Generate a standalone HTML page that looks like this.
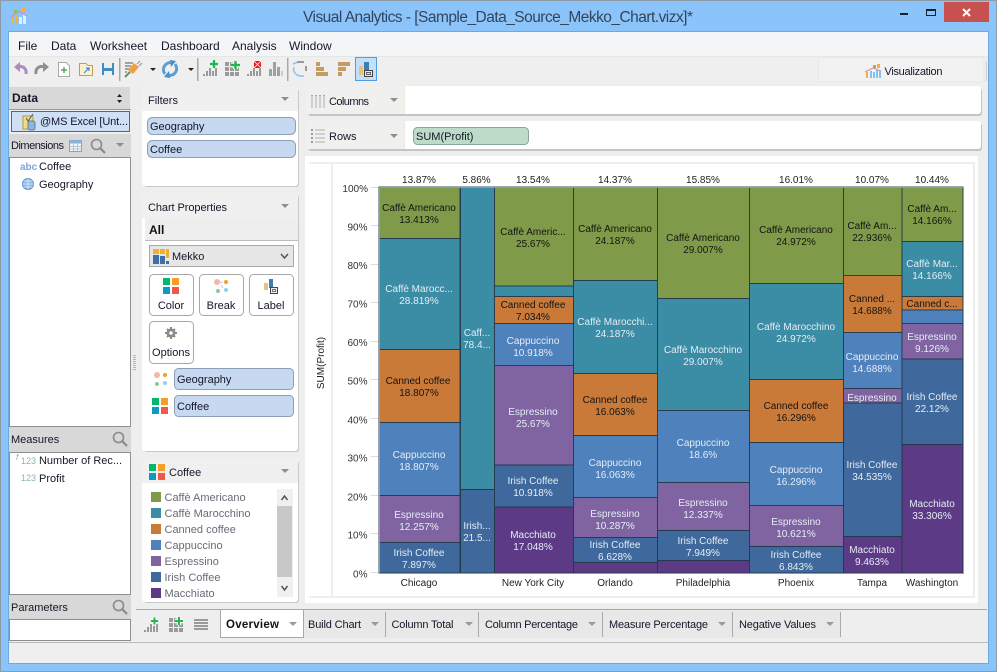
<!DOCTYPE html>
<html><head><meta charset="utf-8"><title>Visual Analytics</title>
<style>
html,body{margin:0;padding:0;background:#8bc4fb;}
svg{display:block;font-family:"Liberation Sans",sans-serif;}
.u{font-size:11px;fill:#16162a;}
.c text{font-size:10px;text-anchor:middle;}
.d text{fill:#141414;}
.l text{fill:#e4edf4;}
.a text{font-size:10px;fill:#333;}
.x text{font-size:10px;fill:#222;text-anchor:middle;}
.s rect{stroke:#24384a;stroke-width:1;stroke-opacity:.9;shape-rendering:crispEdges;}
.lg{font-size:11px;fill:#6a6a78;}
</style></head><body>
<svg width="997" height="672" viewBox="0 0 997 672" xmlns="http://www.w3.org/2000/svg">
<!-- window frame -->
<rect x="0" y="0" width="997" height="672" fill="#8bc4fb"/>
<rect x="0.5" y="0.5" width="996" height="671" fill="none" stroke="#8e9aa6"/>
<rect x="8.5" y="31.5" width="980" height="632" fill="#eeeeee" stroke="#6fa8dc"/>
<text x="498" y="22" font-size="15.5" fill="#34445a" text-anchor="middle" textLength="390" lengthAdjust="spacing">Visual Analytics - [Sample_Data_Source_Mekko_Chart.vizx]*</text>
<!-- app icon -->
<g>
<rect x="11" y="18" width="3" height="6" fill="#f5b335"/><rect x="15" y="15" width="3" height="9" fill="#f5b335"/><rect x="19" y="17" width="3" height="7" fill="#d8f0ff"/><rect x="23" y="14" width="3" height="10" fill="#d8f0ff"/>
<path d="M11 17 L19 11 L27 16" stroke="#d88bb8" stroke-width="1.4" fill="none"/>
<rect x="14" y="10" width="3" height="3" fill="#8cc152"/><rect x="22" y="8" width="4" height="4" fill="#f5b335"/>
</g>
<!-- window controls -->
<rect x="900" y="13" width="8" height="2" fill="#16222e"/>
<rect x="926.5" y="9.5" width="9" height="6" fill="none" stroke="#16222e"/><rect x="926" y="9" width="10" height="2" fill="#16222e"/>
<rect x="944" y="2" width="45" height="20" fill="#c75050"/>
<path d="M963 9 L970 16 M970 9 L963 16" stroke="#fff" stroke-width="2"/>
<!-- menu bar -->
<rect x="9" y="32" width="979" height="24" fill="#f4f5f7"/>
<g font-size="12" fill="#16162a">
<text x="18" y="50">File</text><text x="51" y="50">Data</text><text x="90" y="50">Worksheet</text><text x="161" y="50">Dashboard</text><text x="232" y="50">Analysis</text><text x="289" y="50">Window</text>
</g>
<rect x="9" y="56" width="979" height="1" fill="#e6e6e6"/>
<rect x="9" y="57" width="979" height="28" fill="#efefef"/>
<!-- toolbar icons -->
<path d="M26 74 C27 68 22 65 17 67" fill="none" stroke="#a98cc0" stroke-width="3"/><path d="M14 67 L20 62 L20 72 Z" fill="#a98cc0"/>
<path d="M36 74 C35 68 40 65 45 67" fill="none" stroke="#8f8f8f" stroke-width="3"/><path d="M49 67 L43 62 L43 72 Z" fill="#8f8f8f"/>
<path d="M58.5 62.5 H66 L69.5 66 V76.5 H58.5 Z" fill="#fff" stroke="#aaa"/><path d="M61 70 H67 M64 67 V73" stroke="#2e9d46" stroke-width="1.2"/>
<path d="M79.5 63.5 H86 L88 65.5 H92.5 V75.5 H79.5 Z" fill="#fdf0cf" stroke="#c49a5c"/><path d="M84 73 L89 68 M86 68 H89 V71" stroke="#3d8ed0" stroke-width="1.2" fill="none"/>
<rect x="102" y="63" width="12" height="12" fill="#3f8bc6"/><rect x="104" y="63" width="8" height="5" fill="#efefef"/><rect x="104" y="71" width="8" height="4" fill="#efefef"/>
<rect x="119" y="58" width="1.5" height="23" fill="#a8a8a8"/>
<path d="M125 63 H133 M125 66 H131 M125 69 H129 M125 72 H127" stroke="#8a8a8a" stroke-width="1.500"/>
<path d="M128 70 L134 63 L139 67 L133 74 Z" fill="#f0a040"/>
<path d="M137 64 L140 61 M139 66 L142 63" stroke="#999" stroke-width="1.200"/>
<path d="M130 72 L125 77" stroke="#6a8a60" stroke-width="2"/>
<path d="M150 68 H156 L153 71 Z" fill="#222"/>
<path d="M165 74 C161 69 165 62 172 62.500" fill="none" stroke="#5a9fd4" stroke-width="3"/><path d="M175 64 C179 70 175 76 168 75.500" fill="none" stroke="#5a9fd4" stroke-width="3"/><path d="M170 60 L176 61 L171 67 Z M170 78 L164 77 L169 71 Z" fill="#4a8ec4"/>
<path d="M188 68 H194 L191 71 Z" fill="#222"/>
<rect x="197" y="58" width="1.5" height="23" fill="#a8a8a8"/>
<g fill="#9a9a9a"><rect x="203" y="74" width="2" height="2"/><rect x="206" y="71" width="2" height="5"/><rect x="209" y="68" width="2" height="8"/><rect x="212" y="71" width="2" height="5"/><rect x="215" y="68" width="2" height="8"/></g>
<path d="M210 64 H218 M214 60 V68" stroke="#fff" stroke-width="5"/><path d="M210 64 H218 M214 60 V68" stroke="#1fb84f" stroke-width="2.4"/>
<g fill="#9a9a9a"><rect x="225" y="62" width="4" height="4"/><rect x="230" y="62" width="4" height="4"/><rect x="225" y="67" width="4" height="4"/><rect x="230" y="67" width="4" height="4"/><rect x="235" y="67" width="4" height="4"/><rect x="225" y="72" width="4" height="4"/><rect x="230" y="72" width="4" height="4"/><rect x="235" y="72" width="4" height="4"/></g>
<path d="M231 65 H240 M235.500 61 V69" stroke="#fff" stroke-width="5"/><path d="M231 65 H240 M235.500 61 V69" stroke="#1fb84f" stroke-width="2.4"/>
<g fill="#9a9a9a"><rect x="247" y="74" width="2" height="2"/><rect x="250" y="71" width="2" height="5"/><rect x="253" y="68" width="2" height="8"/><rect x="256" y="71" width="2" height="5"/><rect x="259" y="68" width="2" height="8"/></g>
<rect x="254" y="61" width="7" height="7" fill="#e81b1b"/><path d="M254 61 L261 68 M261 61 L254 68" stroke="#fff" stroke-width=".8"/>
<g fill="#a0a0a0"><rect x="269" y="69" width="3" height="7"/><rect x="273" y="62" width="3" height="14"/><rect x="277" y="67" width="3" height="9"/></g><g fill="#cacaca"><rect x="281" y="71" width="2" height="5"/></g>
<rect x="287" y="58" width="1.5" height="23" fill="#a8a8a8"/>
<path d="M294 67 C292 73 298 77 304 76" stroke="#8fc4ea" stroke-width="1.5" fill="none"/><path d="M293 64 L298 62" stroke="#8fc4ea" stroke-width="1.5"/><rect x="297" y="61" width="7" height="2" fill="#9a9a9a"/><rect x="305" y="66" width="2" height="5" fill="#9a9a9a"/>
<g fill="#c59b63"><rect x="316" y="62" width="4" height="4"/><rect x="316" y="67" width="8" height="4"/><rect x="316" y="72" width="12" height="4"/></g>
<g fill="#c59b63"><rect x="338" y="62" width="12" height="4"/><rect x="338" y="67" width="8" height="4"/><rect x="338" y="72" width="4" height="4"/></g>
<rect x="355.500" y="57.500" width="21" height="23" fill="#c4e0f8" stroke="#4a9de6"/>
<rect x="359" y="66" width="4" height="9" fill="#e6c184"/><rect x="364" y="62" width="5" height="9" fill="#3f7cb0"/><rect x="364.500" y="70.500" width="8" height="6" fill="#dfe8ef" stroke="#444"/><rect x="366.500" y="72.500" width="4" height="2" fill="none" stroke="#444" stroke-width=".8"/>
<!-- visualization tab -->
<path d="M818.500 82 V62 Q818.500 57.500 823 57.500 H982 L984 59 V82 Z" fill="#f2f2f2" stroke="#e8e8e8"/>
<rect x="986" y="62" width="1" height="19" fill="#cfcfcf"/>
<g fill="#7cc5f0"><rect x="870" y="71" width="2" height="7"/><rect x="873" y="72" width="2" height="6"/><rect x="876" y="70" width="2" height="8"/><rect x="879" y="71" width="2" height="7"/></g>
<rect x="866" y="72" width="2" height="6" fill="#f5b335"/><rect x="873" y="65" width="3" height="3" fill="#8cc152"/><rect x="877" y="64" width="3" height="4" fill="#f5b335"/><path d="M865 72 L873 68 L881 71" stroke="#d88bb8" stroke-width="1.200" fill="none"/>
<text x="884.500" y="75" class="u" textLength="58">Visualization</text>

<!-- left panel -->
<rect x="9" y="87" width="121" height="22" fill="#d8d8d8"/>
<text x="12" y="102" font-size="12" font-weight="bold" fill="#16162a">Data</text>
<path d="M117 97 L119.500 94 L122 97 Z M117 100 L119.500 103 L122 100 Z" fill="#222"/>
<rect x="9" y="109" width="122" height="1" fill="#9a9a9a"/>
<rect x="11.500" y="111.500" width="118" height="20" fill="#cfe0f6" stroke="#3a6ea5"/>
<rect x="23" y="116" width="10" height="13" fill="#f3dc7a" stroke="#b59a3a"/><rect x="28" y="121" width="7" height="9" rx="2" fill="#8fb5d8" stroke="#5a7f9f"/><path d="M26 118 L28 121 L33 114" stroke="#3a5a8a" fill="none"/>
<text x="40" y="125" class="u" textLength="88">@MS Excel [Unt...</text>
<rect x="9" y="134" width="122" height="23" fill="#d8d8d8"/>
<text x="11" y="149" class="u" textLength="53">Dimensions</text>
<rect x="69.500" y="140.500" width="12" height="11" fill="#f2f6fa" stroke="#8ca3b8"/><rect x="69.500" y="140.500" width="12" height="3" fill="#8cb4d8"/><path d="M73.500 143 V151 M77.500 143 V151 M70 146.500 H81 M70 149 H81" stroke="#a8bacb" stroke-width=".8"/>
<circle cx="96.500" cy="144.500" r="5" fill="none" stroke="#8a8a8a" stroke-width="1.600"/><path d="M100 148 L105 153" stroke="#8a8a8a" stroke-width="2.200"/>
<path d="M116 143 H124 L120 147 Z" fill="#8f8f8f"/>
<rect x="9.500" y="157.500" width="121" height="269" fill="#fff" stroke="#8f8f8f"/>
<text x="20" y="170" font-size="10" fill="#7aa6e0" font-weight="bold">abc</text>
<text x="39" y="170" class="u">Coffee</text>
<circle cx="28" cy="184" r="5.500" fill="#8cb8e6" stroke="#5a8fd0"/><path d="M22.500 184 H33.500 M28 178.500 V189.500 M23.500 181 H32.500 M23.500 187 H32.500" stroke="#e8f2fb" stroke-width=".7"/>
<text x="39" y="188" class="u">Geography</text>
<rect x="9" y="427" width="122" height="25" fill="#d8d8d8"/>
<text x="11" y="443" class="u">Measures</text>
<circle cx="118.500" cy="437.500" r="5" fill="none" stroke="#8a8a8a" stroke-width="1.600"/><path d="M122 441 L127 446" stroke="#8a8a8a" stroke-width="2.200"/>
<rect x="9.500" y="452.500" width="121" height="142" fill="#fff" stroke="#8f8f8f"/>
<text x="16" y="460" font-size="8" font-style="italic" fill="#7fb09a">f</text><text x="21" y="464" font-size="9" fill="#8ab8a4">123</text>
<text x="39" y="464" class="u" textLength="83">Number of Rec...</text>
<text x="21" y="481" font-size="9" fill="#8ab8a4">123</text>
<text x="39" y="482" class="u">Profit</text>
<rect x="9" y="595" width="122" height="24" fill="#d8d8d8"/>
<text x="11" y="611" class="u">Parameters</text>
<circle cx="118.500" cy="605.500" r="5" fill="none" stroke="#8a8a8a" stroke-width="1.600"/><path d="M122 609 L127 614" stroke="#8a8a8a" stroke-width="2.200"/>
<rect x="9.500" y="619.500" width="121" height="21" fill="#fff" stroke="#8f8f8f"/>
<!-- splitter dots -->
<g fill="#b5b5b5"><rect x="133" y="355" width="3" height="1"/><rect x="133" y="357" width="3" height="1"/><rect x="133" y="359" width="3" height="1"/><rect x="133" y="361" width="3" height="1"/><rect x="133" y="363" width="3" height="1"/><rect x="133" y="365" width="3" height="1"/><rect x="133" y="367" width="3" height="1"/><rect x="133" y="369" width="3" height="1"/></g>

<!-- filters panel -->
<rect x="144" y="89" width="155" height="98" rx="3" fill="#c8c8c8"/>
<rect x="142" y="87" width="156" height="99" rx="3" fill="#fff"/>
<path d="M142 111 V90 Q142 87 145 87 H295 Q298 87 298 90 V111 Z" fill="#f0f0f0"/>
<text x="148" y="104" class="u">Filters</text>
<path d="M281 97 H289 L285 101 Z" fill="#8f8f8f"/>
<rect x="147.500" y="117.500" width="148" height="17" rx="5" fill="#c6d9f1" stroke="#8da0b8"/><text x="150" y="130" class="u">Geography</text>
<rect x="147.500" y="140.500" width="148" height="17" rx="5" fill="#c6d9f1" stroke="#8da0b8"/><text x="150" y="153" class="u">Coffee</text>

<!-- chart properties -->
<rect x="144" y="195" width="155" height="257" rx="3" fill="#c8c8c8"/>
<rect x="142" y="193" width="156" height="258" rx="3" fill="#fff"/>
<path d="M142 218 V196 Q142 193 145 193 H295 Q298 193 298 196 V218 Z" fill="#f0f0f0"/>
<text x="148" y="211" class="u" textLength="79">Chart Properties</text>
<path d="M281 204 H289 L285 208 Z" fill="#8f8f8f"/>
<rect x="145" y="218" width="153" height="22" fill="#eeeeee"/><rect x="145" y="240" width="153" height="1" fill="#bdbdbd"/>
<text x="149" y="234" font-size="12" font-weight="bold" fill="#111">All</text>
<rect x="149.500" y="245.500" width="144" height="21" fill="#e6e6e6" stroke="#a8a8a8"/>
<g><rect x="153" y="249" width="6" height="5" fill="#f0b030"/><rect x="160" y="249" width="5" height="5" fill="#f0b030"/><rect x="166" y="249" width="3" height="9" fill="#f0b030"/><rect x="153" y="255" width="6" height="9" fill="#3f6fa8"/><rect x="160" y="256" width="5" height="8" fill="#3f6fa8"/><rect x="166" y="261" width="3" height="3" fill="#3f6fa8"/></g>
<text x="172" y="260" class="u">Mekko</text>
<path d="M281 254 L284.500 258 L288 254" stroke="#555" stroke-width="1.500" fill="none"/>
<g fill="#fff" stroke="#a8a8a8"><rect x="149.500" y="274.500" width="44" height="41" rx="4"/><rect x="199.500" y="274.500" width="44" height="41" rx="4"/><rect x="249.500" y="274.500" width="44" height="41" rx="4"/><rect x="149.500" y="321.500" width="44" height="42" rx="4"/></g>
<g><rect x="163" y="278" width="7" height="7" fill="#00b96b"/><rect x="172" y="278" width="7" height="7" fill="#f99d25"/><rect x="163" y="287" width="7" height="7" fill="#0a9bc7"/><rect x="172" y="287" width="7" height="7" fill="#f0584b"/></g>
<text x="171" y="309" class="u" text-anchor="middle">Color</text>
<g><circle cx="217" cy="282" r="3" fill="#f5b5a8"/><circle cx="226" cy="282" r="2" fill="#f99d25"/><circle cx="218" cy="291" r="2" fill="#8cc89a"/><circle cx="226" cy="290" r="2" fill="#8fd0f5"/><path d="M220 283 L223 282 M221 285 L223 288" stroke="#bbb" stroke-width=".7"/></g>
<text x="221" y="309" class="u" text-anchor="middle">Break</text>
<g><rect x="264" y="283" width="4" height="7" fill="#e6c184"/><rect x="269" y="279" width="4" height="9" fill="#3f7cb0"/><rect x="270.500" y="287.500" width="7" height="6" fill="#e6edf2" stroke="#444"/><rect x="272.500" y="289.500" width="3" height="2" fill="none" stroke="#444" stroke-width=".7"/></g>
<text x="271" y="309" class="u" text-anchor="middle">Label</text>
<g><path d="M171 327 V339 M165 333 H177 M167 329 L175 337 M175 329 L167 337" stroke="#8a8a8a" stroke-width="2"/><circle cx="171" cy="333" r="4.500" fill="#8a8a8a"/><circle cx="171" cy="333" r="1.800" fill="#fff"/></g>
<text x="171" y="356" class="u" text-anchor="middle">Options</text>
<g><circle cx="157" cy="375" r="3" fill="#f5b5a8"/><circle cx="165" cy="375" r="2" fill="#f99d25"/><circle cx="157" cy="384" r="2" fill="#8cc89a"/><circle cx="165" cy="383" r="2" fill="#8fd0f5"/></g>
<rect x="174.500" y="368.500" width="119" height="21" rx="4" fill="#c6d9f1" stroke="#8da0b8"/><text x="177" y="383" class="u">Geography</text>
<g><rect x="152" y="398" width="7" height="7" fill="#00b96b"/><rect x="161" y="398" width="7" height="7" fill="#f99d25"/><rect x="152" y="407" width="7" height="7" fill="#0a9bc7"/><rect x="161" y="407" width="7" height="7" fill="#f0584b"/></g>
<rect x="174.500" y="395.500" width="119" height="21" rx="4" fill="#c6d9f1" stroke="#8da0b8"/><text x="177" y="410" class="u">Coffee</text>

<!-- legend -->
<rect x="144" y="461" width="155" height="142" rx="3" fill="#c8c8c8"/>
<rect x="142" y="459" width="156" height="143" rx="3" fill="#fff"/>
<path d="M142 483 V462 Q142 459 145 459 H295 Q298 459 298 462 V483 Z" fill="#f0f0f0"/>
<g><rect x="149" y="464" width="7" height="7" fill="#00b96b"/><rect x="158" y="464" width="7" height="7" fill="#f99d25"/><rect x="149" y="473" width="7" height="7" fill="#0a9bc7"/><rect x="158" y="473" width="7" height="7" fill="#f0584b"/></g>
<text x="169" y="476" class="u">Coffee</text>
<path d="M281 469 H289 L285 473 Z" fill="#8f8f8f"/>
<rect x="151" y="492" width="10" height="10" fill="#7f9a48"/><text x="164.500" y="501" class="lg">Caffè Americano</text>
<rect x="151" y="508" width="10" height="10" fill="#3b8ca5"/><text x="164.500" y="517" class="lg">Caffè Marocchino</text>
<rect x="151" y="524" width="10" height="10" fill="#c97a38"/><text x="164.500" y="533" class="lg">Canned coffee</text>
<rect x="151" y="540" width="10" height="10" fill="#4f81bd"/><text x="164.500" y="549" class="lg">Cappuccino</text>
<rect x="151" y="556" width="10" height="10" fill="#8064a2"/><text x="164.500" y="565" class="lg">Espressino</text>
<rect x="151" y="572" width="10" height="10" fill="#3f689c"/><text x="164.500" y="581" class="lg">Irish Coffee</text>
<rect x="151" y="588" width="10" height="10" fill="#5c3a85"/><text x="164.500" y="597" class="lg">Macchiato</text>
<rect x="277" y="489" width="16" height="108" fill="#f0f0f0"/><rect x="277" y="506" width="15" height="71" fill="#c8c8c8"/>
<path d="M281.500 500 L284.500 496 L287.500 500 M281.500 586 L284.500 590 L287.500 586" stroke="#555" stroke-width="1.500" fill="none"/>

<!-- shelves -->
<rect x="308" y="88" width="674" height="28" rx="3" fill="#c4c4c4"/>
<rect x="306" y="86" width="675" height="28" rx="3" fill="#fff"/>
<path d="M405 86 H309 Q306 86 306 89 V114 H405 Z" fill="#f0f0ee"/><rect x="404" y="86" width="1" height="28" fill="#eeeadb"/>
<g fill="#cfcfcf"><rect x="311" y="95" width="2" height="13"/><rect x="315" y="95" width="2" height="13"/><rect x="319" y="95" width="2" height="13"/><rect x="323" y="95" width="2" height="13"/></g><g fill="#aaa"><rect x="311" y="95" width="2" height="1"/><rect x="315" y="95" width="2" height="1"/><rect x="319" y="95" width="2" height="1"/><rect x="323" y="95" width="2" height="1"/></g>
<text x="329" y="105" class="u" textLength="40">Columns</text>
<path d="M390 98 H398 L394 102 Z" fill="#8f8f8f"/>
<rect x="308" y="123" width="674" height="28" rx="3" fill="#c4c4c4"/>
<rect x="306" y="121" width="675" height="28" rx="3" fill="#fff"/>
<path d="M405 121 H309 Q306 121 306 124 V149 H405 Z" fill="#f0f0ee"/><rect x="404" y="121" width="1" height="28" fill="#eeeadb"/>
<g fill="#d0d0d0"><rect x="315" y="129" width="10" height="2"/><rect x="315" y="133" width="10" height="2"/><rect x="315" y="137" width="10" height="2"/><rect x="315" y="141" width="10" height="2"/></g><g fill="#999"><rect x="311" y="129" width="2" height="2"/><rect x="311" y="133" width="2" height="2"/><rect x="311" y="137" width="2" height="2"/><rect x="311" y="141" width="2" height="2"/></g>
<text x="329" y="140" class="u">Rows</text>
<path d="M390 134 H398 L394 138 Z" fill="#8f8f8f"/>
<rect x="413.500" y="127.500" width="115" height="17" rx="4" fill="#bcdcc9" stroke="#86a898"/><text x="416" y="140" class="u">SUM(Profit)</text>

<!-- chart container -->
<rect x="305" y="156" width="673" height="447" fill="#fff"/>
<rect x="309" y="162" width="666" height="2" fill="#eeeeee"/>
<rect x="309" y="596" width="666" height="2" fill="#eeeeee"/>
<rect x="331" y="164" width="2" height="432" fill="#eeeeee"/>
<rect x="973" y="162" width="2" height="436" fill="#eeeeee"/>

<!-- axis -->
<g class="a" text-anchor="end">
<text x="368" y="192" text-anchor="end">100%</text><text x="367.500" y="230.500" text-anchor="end">90%</text><text x="367.500" y="269" text-anchor="end">80%</text><text x="367.500" y="307.500" text-anchor="end">70%</text><text x="367.500" y="346" text-anchor="end">60%</text><text x="367.500" y="384.500" text-anchor="end">50%</text><text x="367.500" y="423.500" text-anchor="end">40%</text><text x="367.500" y="461.500" text-anchor="end">30%</text><text x="367.500" y="500.500" text-anchor="end">20%</text><text x="367.500" y="538.500" text-anchor="end">10%</text><text x="367.500" y="577.500" text-anchor="end">0%</text>
</g>
<g fill="#dddddd"><rect x="371" y="187" width="8" height="1"/><rect x="371" y="225" width="8" height="1"/><rect x="371" y="264" width="8" height="1"/><rect x="371" y="302" width="8" height="1"/><rect x="371" y="341" width="8" height="1"/><rect x="371" y="379" width="8" height="1"/><rect x="371" y="418" width="8" height="1"/><rect x="371" y="456" width="8" height="1"/><rect x="371" y="495" width="8" height="1"/><rect x="371" y="533" width="8" height="1"/><rect x="371" y="572" width="8" height="1"/></g>
<text transform="translate(324 363) rotate(-90)" font-size="10" fill="#222" text-anchor="middle">SUM(Profit)</text>

<!-- mekko -->
<g class="s">
<rect x="379" y="187" width="81" height="51.300" fill="#7f9a48"/><rect x="379" y="238.300" width="81" height="111" fill="#3b8ca5"/><rect x="379" y="349.300" width="81" height="73" fill="#c97a38"/><rect x="379" y="422.300" width="81" height="73" fill="#4f81bd"/><rect x="379" y="495.300" width="81" height="47" fill="#8064a2"/><rect x="379" y="542.300" width="81" height="30.700" fill="#3f689c"/>
<rect x="460.300" y="187" width="34" height="302.300" fill="#3b8ca5"/><rect x="460.300" y="489.300" width="34" height="83.700" fill="#3f689c"/>
<rect x="494.300" y="187" width="79" height="99" fill="#7f9a48"/><rect x="494.300" y="286" width="79" height="10.700" fill="#3b8ca5"/><rect x="494.300" y="296.700" width="79" height="26.600" fill="#c97a38"/><rect x="494.300" y="323.300" width="79" height="42.400" fill="#4f81bd"/><rect x="494.300" y="365.700" width="79" height="99.300" fill="#8064a2"/><rect x="494.300" y="465" width="79" height="42" fill="#3f689c"/><rect x="494.300" y="507" width="79" height="66" fill="#5c3a85"/>
<rect x="573.300" y="187" width="84" height="93.300" fill="#7f9a48"/><rect x="573.300" y="280.300" width="84" height="93" fill="#3b8ca5"/><rect x="573.300" y="373.300" width="84" height="62" fill="#c97a38"/><rect x="573.300" y="435.300" width="84" height="62" fill="#4f81bd"/><rect x="573.300" y="497.300" width="84" height="40" fill="#8064a2"/><rect x="573.300" y="537.300" width="84" height="25.400" fill="#3f689c"/><rect x="573.300" y="562.700" width="84" height="10.300" fill="#5c3a85"/>
<rect x="657.300" y="187" width="92" height="111.700" fill="#7f9a48"/><rect x="657.300" y="298.700" width="92" height="112" fill="#3b8ca5"/><rect x="657.300" y="410.700" width="92" height="71.600" fill="#4f81bd"/><rect x="657.300" y="482.300" width="92" height="48" fill="#8064a2"/><rect x="657.300" y="530.300" width="92" height="30.400" fill="#3f689c"/><rect x="657.300" y="560.700" width="92" height="12.300" fill="#5c3a85"/>
<rect x="749.300" y="187" width="94" height="96.300" fill="#7f9a48"/><rect x="749.300" y="283.300" width="94" height="96" fill="#3b8ca5"/><rect x="749.300" y="379.300" width="94" height="63" fill="#c97a38"/><rect x="749.300" y="442.300" width="94" height="63" fill="#4f81bd"/><rect x="749.300" y="505.300" width="94" height="41" fill="#8064a2"/><rect x="749.300" y="546.300" width="94" height="26.700" fill="#3f689c"/>
<rect x="843.300" y="187" width="58.700" height="88.300" fill="#7f9a48"/><rect x="843.300" y="275.300" width="58.700" height="57" fill="#c97a38"/><rect x="843.300" y="332.300" width="58.700" height="56" fill="#4f81bd"/><rect x="843.300" y="388.300" width="58.700" height="14.700" fill="#8064a2"/><rect x="843.300" y="403" width="58.700" height="133.300" fill="#3f689c"/><rect x="843.300" y="536.300" width="58.700" height="36.700" fill="#5c3a85"/>
<rect x="902" y="187" width="61" height="54.300" fill="#7f9a48"/><rect x="902" y="241.300" width="61" height="55" fill="#3b8ca5"/><rect x="902" y="296.300" width="61" height="13.700" fill="#c97a38"/><rect x="902" y="310" width="61" height="13.700" fill="#4f81bd"/><rect x="902" y="323.700" width="61" height="35.300" fill="#8064a2"/><rect x="902" y="359" width="61" height="85.300" fill="#3f689c"/><rect x="902" y="444.300" width="61" height="128.700" fill="#5c3a85"/>
</g>
<path d="M379.500 187.500 V573.500 H963.500 V187.500 H379.500" fill="none" stroke="#9a9a9a"/>

<!-- totals -->
<g class="c"><g fill="#222">
<text x="419" y="183">13.87%</text><text x="476.500" y="183">5.86%</text><text x="533" y="183">13.54%</text><text x="615" y="183">14.37%</text><text x="703" y="183">15.85%</text><text x="796" y="183">16.01%</text><text x="872" y="183">10.07%</text><text x="932" y="183">10.44%</text>
</g>
<!-- dark labels -->
<g class="d">
<text x="419" y="211">Caffè Americano</text><text x="419" y="223">13.413%</text>
<text x="418" y="384">Canned coffee</text><text x="419" y="396">18.807%</text>
<text x="533" y="235">Caffè Americ...</text><text x="533" y="247">25.67%</text>
<text x="533" y="308">Canned coffee</text><text x="533" y="320">7.034%</text>
<text x="615" y="232">Caffè Americano</text><text x="615" y="244">24.187%</text>
<text x="615" y="403">Canned coffee</text><text x="615" y="415">16.063%</text>
<text x="703" y="241">Caffè Americano</text><text x="703" y="253">29.007%</text>
<text x="796" y="233">Caffè Americano</text><text x="796" y="245">24.972%</text>
<text x="796" y="409">Canned coffee</text><text x="796" y="421">16.296%</text>
<text x="872" y="229">Caffè Am...</text><text x="872" y="241">22.936%</text>
<text x="872" y="302">Canned ...</text><text x="872" y="314">14.688%</text>
<text x="932" y="212">Caffè Am...</text><text x="932" y="224">14.166%</text>
<text x="932" y="307">Canned c...</text>
</g>
<!-- light labels -->
<g class="l">
<text x="419" y="292">Caffè Marocc...</text><text x="419" y="304">28.819%</text>
<text x="419" y="458">Cappuccino</text><text x="419" y="470">18.807%</text>
<text x="419" y="518">Espressino</text><text x="419" y="530">12.257%</text>
<text x="419" y="556">Irish Coffee</text><text x="419" y="568">7.897%</text>
<text x="477" y="336">Caff...</text><text x="477" y="348">78.4...</text>
<text x="477" y="529">Irish...</text><text x="477" y="541">21.5...</text>
<text x="533" y="344">Cappuccino</text><text x="533" y="356">10.918%</text>
<text x="533" y="415">Espressino</text><text x="533" y="427">25.67%</text>
<text x="533" y="484">Irish Coffee</text><text x="533" y="496">10.918%</text>
<text x="533" y="538">Macchiato</text><text x="533" y="550">17.048%</text>
<text x="615" y="325">Caffè Marocchi...</text><text x="615" y="337">24.187%</text>
<text x="615" y="466">Cappuccino</text><text x="615" y="478">16.063%</text>
<text x="615" y="517">Espressino</text><text x="615" y="529">10.287%</text>
<text x="615" y="548">Irish Coffee</text><text x="615" y="560">6.628%</text>
<text x="703" y="353">Caffè Marocchino</text><text x="703" y="365">29.007%</text>
<text x="703" y="446">Cappuccino</text><text x="703" y="458">18.6%</text>
<text x="703" y="506">Espressino</text><text x="703" y="518">12.337%</text>
<text x="703" y="544">Irish Coffee</text><text x="703" y="556">7.949%</text>
<text x="796" y="330">Caffè Marocchino</text><text x="796" y="342">24.972%</text>
<text x="796" y="473">Cappuccino</text><text x="796" y="485">16.296%</text>
<text x="796" y="525">Espressino</text><text x="796" y="537">10.621%</text>
<text x="796" y="558">Irish Coffee</text><text x="796" y="570">6.843%</text>
<text x="872" y="360">Cappuccino</text><text x="872" y="372">14.688%</text>
<text x="872" y="401">Espressino</text>
<text x="872" y="468">Irish Coffee</text><text x="872" y="480">34.535%</text>
<text x="872" y="553">Macchiato</text><text x="872" y="565">9.463%</text>
<text x="932" y="267">Caffè Mar...</text><text x="932" y="279">14.166%</text>
<text x="932" y="340">Espressino</text><text x="932" y="352">9.126%</text>
<text x="932" y="400">Irish Coffee</text><text x="932" y="412">22.12%</text>
<text x="932" y="507">Macchiato</text><text x="932" y="519">33.306%</text>
</g></g>
<g class="x"><text x="419" y="586">Chicago</text><text x="533" y="586">New York City</text><text x="615" y="586">Orlando</text><text x="703" y="586">Philadelphia</text><text x="796" y="586">Phoenix</text><text x="872" y="586">Tampa</text><text x="932" y="586">Washington</text></g>

<!-- tab strip -->
<rect x="136" y="609" width="851" height="1" fill="#a8a8a8"/>
<rect x="303" y="610" width="538" height="28" fill="#e8e8e8"/>
<rect x="220.500" y="609.500" width="83" height="28" fill="#fff" stroke="#a8a8a8"/>
<text x="226" y="628" font-size="11.500" font-weight="bold" fill="#111" textLength="53">Overview</text>
<g fill="#9a9a9a"><path d="M289 622 H297 L293 626 Z"/><path d="M371 622 H379 L375 626 Z"/><path d="M465 622 H473 L469 626 Z"/><path d="M588 622 H596 L592 626 Z"/><path d="M718 622 H726 L722 626 Z"/><path d="M826 622 H834 L830 626 Z"/></g>
<g fill="#aaaaaa"><rect x="385" y="612" width="1" height="25"/><rect x="478" y="612" width="1" height="25"/><rect x="602" y="612" width="1" height="25"/><rect x="732" y="612" width="1" height="25"/><rect x="840" y="612" width="1" height="25"/></g>
<g class="u"><text x="308" y="628" textLength="53">Build Chart</text><text x="391.500" y="628" textLength="62">Column Total</text><text x="485" y="628" textLength="93">Column Percentage</text><text x="609" y="628" textLength="99">Measure Percentage</text><text x="739" y="628" textLength="77">Negative Values</text></g>
<g fill="#9a9a9a"><rect x="144" y="630" width="2" height="2"/><rect x="147" y="627" width="2" height="5"/><rect x="150" y="624" width="2" height="8"/><rect x="153" y="626" width="2" height="6"/><rect x="156" y="624" width="2" height="8"/></g>
<path d="M151 621 H158 M154.500 617.500 V624.500" stroke="#fff" stroke-width="4.500"/><path d="M151 621 H158 M154.500 617.500 V624.500" stroke="#1fb84f" stroke-width="2"/>
<g fill="#9a9a9a"><rect x="169" y="618" width="4" height="4"/><rect x="174" y="618" width="4" height="4"/><rect x="169" y="623" width="4" height="4"/><rect x="174" y="623" width="4" height="4"/><rect x="179" y="623" width="4" height="4"/><rect x="169" y="628" width="4" height="4"/><rect x="174" y="628" width="4" height="4"/><rect x="179" y="628" width="4" height="4"/></g>
<path d="M175 621 H183 M179 617 V625" stroke="#fff" stroke-width="4.500"/><path d="M175 621 H183 M179 617 V625" stroke="#1fb84f" stroke-width="2"/>
<g fill="#9a9a9a"><rect x="194" y="619" width="14" height="2"/><rect x="194" y="622" width="14" height="2"/><rect x="194" y="625" width="14" height="2"/><rect x="194" y="628" width="14" height="2"/></g>
<rect x="9" y="642" width="979" height="1" fill="#bcbcbc"/>
<rect x="9" y="643" width="979" height="20" fill="#efefef"/>
</svg>
</body></html>
